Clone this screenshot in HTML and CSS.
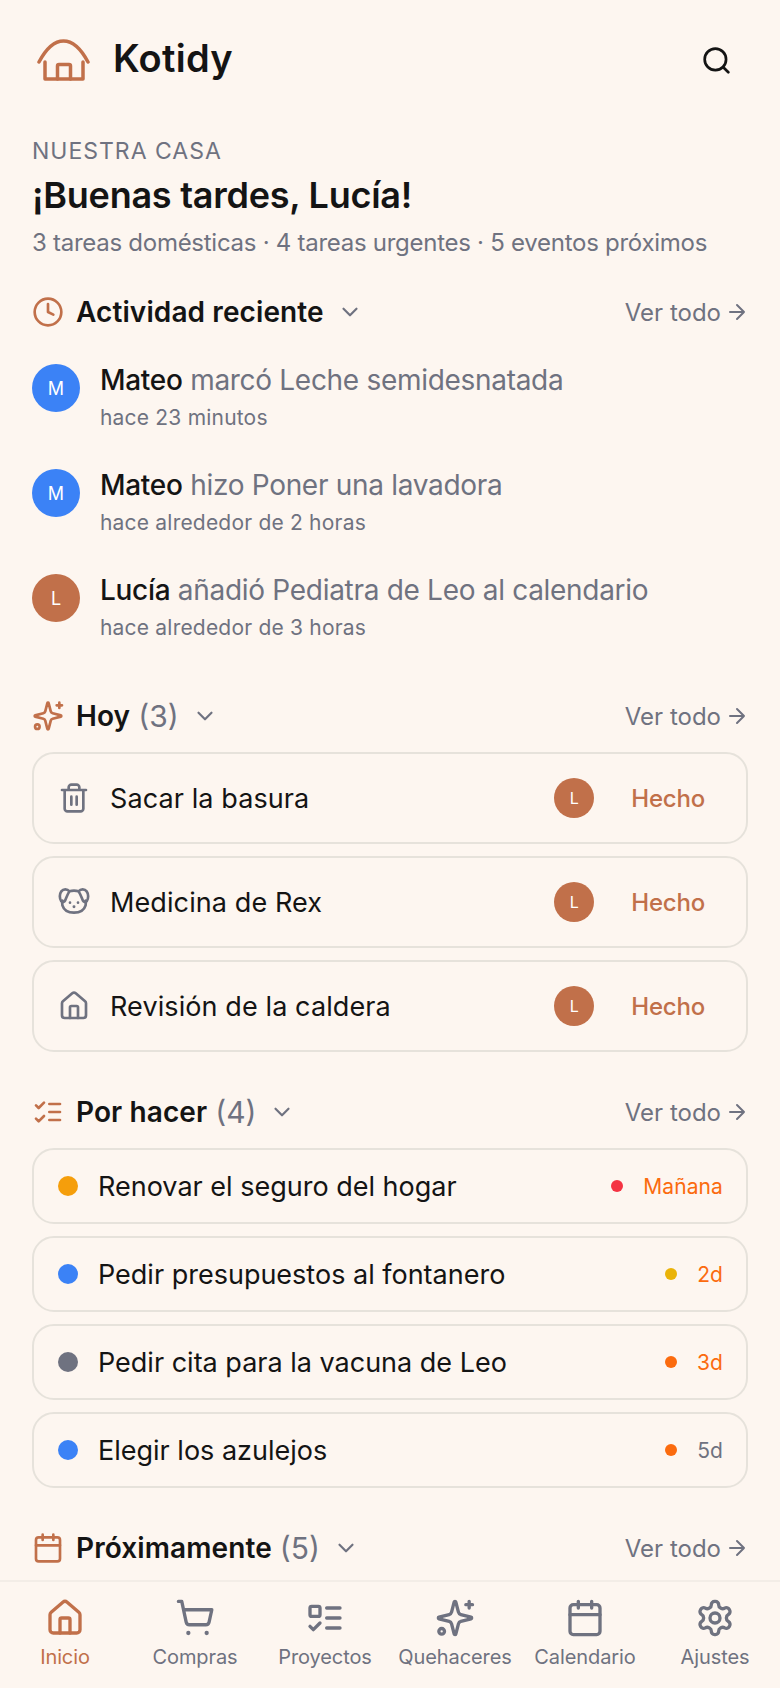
FILE: index.html
```html
<!DOCTYPE html>
<html lang="es">
<head>
    <meta charset="UTF-8">
    <meta name="viewport" content="width=device-width, initial-scale=1.0">
    <title>Kotidy</title>
    <link rel="stylesheet" href="styles.css">
</head>
<body>
    <!-- Iconos -->
    <svg class="sprite" xmlns="http://www.w3.org/2000/svg">
        <symbol id="i-home" viewBox="0 0 24 24"><path d="M3 10a2 2 0 0 1 .7-1.500l7-6a2 2 0 0 1 2.600 0l7 6a2 2 0 0 1 .7 1.500v9a2 2 0 0 1-2 2H5a2 2 0 0 1-2-2z"/><path d="M15 21v-8a1 1 0 0 0-1-1h-4a1 1 0 0 0-1 1v8"/></symbol>
        <symbol id="i-clock" viewBox="0 0 24 24"><circle cx="12" cy="12" r="10"/><path d="M12 6v6l4 2"/></symbol>
        <symbol id="i-chevron" viewBox="0 0 24 24"><path d="m6 9 6 6 6-6"/></symbol>
        <symbol id="i-arrow" viewBox="0 0 24 24"><path d="M5 12h14M12 5l7 7-7 7"/></symbol>
        <symbol id="i-sparkle" viewBox="0 0 24 24"><path d="M9.937 15.500A2 2 0 0 0 8.500 14.063l-6.135-1.582a.5.5 0 0 1 0-.962L8.500 9.936A2 2 0 0 0 9.937 8.500l1.582-6.135a.5.5 0 0 1 .963 0L14.063 8.500A2 2 0 0 0 15.500 9.937l6.135 1.581a.5.5 0 0 1 0 .964L15.500 14.063a2 2 0 0 0-1.437 1.437l-1.582 6.135a.5.5 0 0 1-.963 0z"/><path d="M20.500 2v4M18.500 4h4"/><circle cx="4" cy="20" r="1.700"/></symbol>
        <symbol id="i-checks" viewBox="0 0 24 24"><path d="m3 7 2 2 4-4M3 17l2 2 4-4M13 6h8M13 12h8M13 18h8"/></symbol>
        <symbol id="i-calendar" viewBox="0 0 24 24"><rect x="3" y="4" width="18" height="18" rx="2"/><path d="M3 10h18M8 2v4M16 2v4"/></symbol>
        <symbol id="i-trash" viewBox="0 0 24 24"><path d="M3 6h18M19 6v14c0 1-1 2-2 2H7c-1 0-2-1-2-2V6M8 6V4c0-1 1-2 2-2h4c1 0 2 1 2 2v2M10 11v6M14 11v6"/></symbol>
        <symbol id="i-dog" viewBox="0 0 24 24"><path d="M3.500 11c-.5 1.500-.5 2.500-.2 3.500C4.500 18.500 8 20 12 20s7.500-1.500 8.700-5.500c.3-1 .3-2-.2-3.500"/><path d="M8.500 4c2.300-.7 4.700-.7 7 0"/><path d="M8.500 4C7 2 4 2 2.500 4 1 6 1 9.500 2.500 11.500c1 1 2.300.5 2.800-.5.7-1.500 1.700-4.500 3.200-7z"/><path d="M15.500 4c1.500-2 4.500-2 6 0 1.500 2 1.500 5.500 0 7.500-1 1-2.300.5-2.800-.5-.7-1.500-1.700-4.500-3.200-7z"/><circle class="fill" cx="9" cy="12.500" r="1"/><circle class="fill" cx="15" cy="12.500" r="1"/><circle class="fill" cx="12" cy="15.500" r="1.100"/></symbol>
        <symbol id="i-cart" viewBox="0 0 24 24"><path d="M2.050 2.050h2l2.660 12.420a2 2 0 0 0 2 1.580h9.780a2 2 0 0 0 1.950-1.570l1.650-7.430H5.120"/><circle class="fill" cx="8" cy="21" r="1.300"/><circle class="fill" cx="19" cy="21" r="1.300"/></symbol>
        <symbol id="i-project" viewBox="0 0 24 24"><rect x="3" y="5" width="6" height="6" rx="1"/><path d="m3 17 2 2 4-4M13 6h8M13 12h8M13 18h8"/></symbol>
        <symbol id="i-gear" viewBox="0 0 24 24"><path d="M12.220 2h-.44a2 2 0 0 0-2 2v.18a2 2 0 0 1-1 1.730l-.43.25a2 2 0 0 1-2 0l-.15-.08a2 2 0 0 0-2.730.73l-.22.38a2 2 0 0 0 .73 2.730l.15.1a2 2 0 0 1 1 1.720v.51a2 2 0 0 1-1 1.740l-.15.09a2 2 0 0 0-.73 2.730l.22.38a2 2 0 0 0 2.730.73l.15-.08a2 2 0 0 1 2 0l.43.25a2 2 0 0 1 1 1.730V20a2 2 0 0 0 2 2h.44a2 2 0 0 0 2-2v-.18a2 2 0 0 1 1-1.730l.43-.25a2 2 0 0 1 2 0l.15.08a2 2 0 0 0 2.730-.73l.22-.39a2 2 0 0 0-.73-2.730l-.15-.08a2 2 0 0 1-1-1.740v-.5a2 2 0 0 1 1-1.740l.15-.09a2 2 0 0 0 .73-2.730l-.22-.38a2 2 0 0 0-2.730-.73l-.15.08a2 2 0 0 1-2 0l-.43-.25a2 2 0 0 1-1-1.730V4a2 2 0 0 0-2-2z"/><circle cx="12" cy="12" r="3"/></symbol>
    </svg>

    <div class="app">
        <main class="content">
            <header class="topbar">
                <div class="brand">
                    <svg class="logo" viewBox="0 0 54 42"><path d="M2 23C10 8 18 2 26.500 2S43 8 51 23"/><path d="M8 23v17h38V23"/><path d="M20.500 40V27a1.500 1.500 0 0 1 1.500-1.500h10a1.500 1.500 0 0 1 1.500 1.500v13"/></svg>
                    <span class="brand-name">Kotidy</span>
                </div>
                <svg class="search" viewBox="0 0 24 24"><circle cx="11" cy="11" r="9.500"/><path d="m18 18 4.500 4.500"/></svg>
            </header>

            <section class="hello">
                <div class="eyebrow">NUESTRA CASA</div>
                <h1 class="greeting">¡Buenas tardes, Lucía!</h1>
                <p class="summary">3 tareas domésticas · 4 tareas urgentes · 5 eventos próximos</p>
            </section>

            <section class="activity">
                <div class="section-head">
                    <svg class="ico ico-head"><use href="#i-clock"/></svg>
                    <h2 class="section-title">Actividad reciente</h2>
                    <svg class="ico ico-chevron"><use href="#i-chevron"/></svg>
                    <a class="see-all">Ver todo <svg class="ico ico-arrow"><use href="#i-arrow"/></svg></a>
                </div>
                <ul class="feed">
                    <li class="feed-item">
                        <span class="avatar avatar-lg blue">M</span>
                        <div>
                            <div class="feed-text"><b>Mateo</b> marcó Leche semidesnatada</div>
                            <div class="feed-time">hace 23 minutos</div>
                        </div>
                    </li>
                    <li class="feed-item">
                        <span class="avatar avatar-lg blue">M</span>
                        <div>
                            <div class="feed-text"><b>Mateo</b> hizo Poner una lavadora</div>
                            <div class="feed-time">hace alrededor de 2 horas</div>
                        </div>
                    </li>
                    <li class="feed-item">
                        <span class="avatar avatar-lg clay">L</span>
                        <div>
                            <div class="feed-text"><b>Lucía</b> añadió Pediatra de Leo al calendario</div>
                            <div class="feed-time">hace alrededor de 3 horas</div>
                        </div>
                    </li>
                </ul>
            </section>

            <section class="today">
                <div class="section-head">
                    <svg class="ico ico-head"><use href="#i-sparkle"/></svg>
                    <h2 class="section-title">Hoy</h2>
                    <span class="count">(3)</span>
                    <svg class="ico ico-chevron"><use href="#i-chevron"/></svg>
                    <a class="see-all">Ver todo <svg class="ico ico-arrow"><use href="#i-arrow"/></svg></a>
                </div>
                <div class="cards">
                    <div class="card chore">
                        <svg class="ico ico-chore"><use href="#i-trash"/></svg>
                        <span class="chore-name">Sacar la basura</span>
                        <span class="avatar avatar-sm clay">L</span>
                        <span class="done">Hecho</span>
                    </div>
                    <div class="card chore">
                        <svg class="ico ico-chore"><use href="#i-dog"/></svg>
                        <span class="chore-name">Medicina de Rex</span>
                        <span class="avatar avatar-sm clay">L</span>
                        <span class="done">Hecho</span>
                    </div>
                    <div class="card chore">
                        <svg class="ico ico-chore"><use href="#i-home"/></svg>
                        <span class="chore-name">Revisión de la caldera</span>
                        <span class="avatar avatar-sm clay">L</span>
                        <span class="done">Hecho</span>
                    </div>
                </div>
            </section>

            <section class="todo">
                <div class="section-head">
                    <svg class="ico ico-head"><use href="#i-checks"/></svg>
                    <h2 class="section-title">Por hacer</h2>
                    <span class="count">(4)</span>
                    <svg class="ico ico-chevron"><use href="#i-chevron"/></svg>
                    <a class="see-all">Ver todo <svg class="ico ico-arrow"><use href="#i-arrow"/></svg></a>
                </div>
                <div class="cards">
                    <div class="card task">
                        <span class="dot amber"></span>
                        <span class="task-name">Renovar el seguro del hogar</span>
                        <span class="due-dot red"></span>
                        <span class="due orange-text">Mañana</span>
                    </div>
                    <div class="card task">
                        <span class="dot blue"></span>
                        <span class="task-name">Pedir presupuestos al fontanero</span>
                        <span class="due-dot yellow"></span>
                        <span class="due orange-text">2d</span>
                    </div>
                    <div class="card task">
                        <span class="dot gray"></span>
                        <span class="task-name">Pedir cita para la vacuna de Leo</span>
                        <span class="due-dot orange"></span>
                        <span class="due orange-text">3d</span>
                    </div>
                    <div class="card task">
                        <span class="dot blue"></span>
                        <span class="task-name">Elegir los azulejos</span>
                        <span class="due-dot orange"></span>
                        <span class="due">5d</span>
                    </div>
                </div>
            </section>

            <section class="upcoming">
                <div class="section-head">
                    <svg class="ico ico-head"><use href="#i-calendar"/></svg>
                    <h2 class="section-title">Próximamente</h2>
                    <span class="count">(5)</span>
                    <svg class="ico ico-chevron"><use href="#i-chevron"/></svg>
                    <a class="see-all">Ver todo <svg class="ico ico-arrow"><use href="#i-arrow"/></svg></a>
                </div>
            </section>
        </main>

        <nav class="tabbar">
            <a class="tab active"><svg class="ico ico-tab"><use href="#i-home"/></svg>Inicio</a>
            <a class="tab"><svg class="ico ico-tab"><use href="#i-cart"/></svg>Compras</a>
            <a class="tab"><svg class="ico ico-tab"><use href="#i-project"/></svg>Proyectos</a>
            <a class="tab"><svg class="ico ico-tab"><use href="#i-sparkle"/></svg>Quehaceres</a>
            <a class="tab"><svg class="ico ico-tab"><use href="#i-calendar"/></svg>Calendario</a>
            <a class="tab"><svg class="ico ico-tab"><use href="#i-gear"/></svg>Ajustes</a>
        </nav>
    </div>
</body>
</html>
```

FILE: styles.css
```css
* {
    box-sizing: border-box;
}
body {
    margin: 0;
    background-color: #fdf6f0;
    color: #141414;
    font-family: Inter, "Noto Sans", sans-serif;
}
.sprite {
    display: none;
}
.app {
    display: flex;
    flex-direction: column;
    height: 100vh;
    overflow: hidden;
}
.content {
    flex: 1;
    min-height: 0;
    overflow: hidden;
    padding: 0 32px;
}
.ico {
    fill: none;
    stroke: currentColor;
    stroke-width: 2;
    stroke-linecap: round;
    stroke-linejoin: round;
    flex: none;
}
.fill {
    fill: currentColor;
    stroke: none;
}

/* Cabecera */
.topbar {
    display: flex;
    align-items: center;
    justify-content: space-between;
    height: 56px;
    margin-top: 32px;
    padding: 0 18px 0 5px;
}
.brand {
    display: flex;
    align-items: center;
    gap: 22px;
}
.logo {
    width: 54px;
    height: 42px;
    fill: none;
    stroke: #c1704a;
    stroke-width: 3.5;
    stroke-linecap: round;
    stroke-linejoin: round;
}
.brand-name {
    margin-top: -4px;
    font-size: 38px;
    font-weight: 600;
    letter-spacing: 0.3px;
}
.search {
    width: 27px;
    height: 27px;
    fill: none;
    stroke: #141414;
    stroke-width: 2.4;
    stroke-linecap: round;
}
.hello {
    margin-top: 49px;
}
.eyebrow {
    font-size: 23px;
    line-height: 28px;
    color: #6f7280;
    letter-spacing: 1px;
}
.greeting {
    margin: 8px 0 0;
    font-size: 36px;
    line-height: 44px;
    font-weight: 600;
    letter-spacing: -0.25px;
}
.summary {
    margin: 11px 0 0;
    font-size: 24px;
    line-height: 30px;
    color: #6f7280;
    letter-spacing: -0.27px;
}

/* Cabeceras de seccion */
.section-head {
    display: flex;
    align-items: center;
    height: 40px;
}
.ico-head {
    width: 32px;
    height: 32px;
    color: #c1704a;
    margin-right: 12px;
}
.section-title {
    margin: 0;
    font-size: 28px;
    font-weight: 600;
    letter-spacing: 0.1px;
}
.count {
    margin-left: 8px;
    font-size: 30px;
    color: #6f7280;
}
.ico-chevron {
    width: 26px;
    height: 26px;
    margin-left: 13px;
    color: #6f7280;
}
.see-all {
    display: flex;
    align-items: center;
    gap: 4px;
    margin-left: auto;
    margin-right: -1px;
    font-size: 24px;
    color: #6f7280;
}
.ico-arrow {
    width: 24px;
    height: 24px;
}

/* Actividad */
.activity {
    margin-top: 34px;
}
.feed {
    list-style: none;
    margin: 30px 0 0;
    padding: 0;
}
.feed-item {
    display: flex;
    gap: 20px;
    height: 105px;
}
.avatar {
    display: flex;
    align-items: center;
    justify-content: center;
    flex: none;
    border-radius: 50%;
    color: #fff;
}
.avatar-lg {
    width: 48px;
    height: 48px;
    margin-top: 2px;
    font-size: 18px;
}
.avatar-sm {
    width: 40px;
    height: 40px;
    font-size: 16px;
}
.feed-text {
    font-size: 28px;
    line-height: 36px;
    color: #6f7280;
    letter-spacing: -0.3px;
}
.feed-text b {
    color: #141414;
    font-weight: 500;
}
.feed-time {
    margin-top: 7px;
    font-size: 21px;
    line-height: 26px;
    color: #6f7280;
    letter-spacing: 0.2px;
}
.blue {
    background-color: #3b82f6;
}
.clay {
    background-color: #c1704a;
}

/* Tarjetas */
.today {
    margin-top: 19px;
}
.todo {
    margin-top: 40px;
}
.upcoming {
    margin-top: 40px;
}
.cards {
    display: flex;
    flex-direction: column;
    gap: 12px;
    margin-top: 16px;
}
.card {
    display: flex;
    align-items: center;
    border: 2px solid #e6e2db;
    border-radius: 22px;
}
.chore {
    height: 92px;
    padding: 0 41px 0 24px;
}
.ico-chore {
    width: 32px;
    height: 32px;
    color: #6f7280;
}
.chore-name {
    flex: 1;
    margin-left: 20px;
    font-size: 27px;
    letter-spacing: 0.1px;
}
.done {
    margin-left: 37px;
    font-size: 24px;
    font-weight: 500;
    color: #c1704a;
    letter-spacing: -0.2px;
}
.task {
    height: 76px;
    padding: 0 23px 0 24px;
}
.dot {
    width: 20px;
    height: 20px;
    border-radius: 50%;
    flex: none;
}
.task-name {
    flex: 1;
    margin-left: 20px;
    font-size: 27px;
}
.due-dot {
    width: 12px;
    height: 12px;
    border-radius: 50%;
    flex: none;
}
.due {
    margin-left: 20px;
    font-size: 21px;
    color: #6f7280;
    letter-spacing: 0.1px;
}
.orange-text {
    color: #fb6b0e;
}
.amber {
    background-color: #f59e0b;
}
.gray {
    background-color: #6f7280;
}
.red {
    background-color: #f43343;
}
.yellow {
    background-color: #eab308;
}
.orange {
    background-color: #fb6b0e;
}

/* Barra inferior */
.tabbar {
    display: grid;
    grid-template-columns: repeat(6, 1fr);
    flex: none;
    height: 108px;
    border-top: 2px solid #f3ede7;
}
.tab {
    display: flex;
    flex-direction: column;
    align-items: center;
    gap: 7px;
    padding-top: 16px;
    font-size: 20px;
    color: #6f7280;
    letter-spacing: -0.1px;
}
.tab.active {
    color: #c1704a;
}
.ico-tab {
    width: 40px;
    height: 40px;
}
```
